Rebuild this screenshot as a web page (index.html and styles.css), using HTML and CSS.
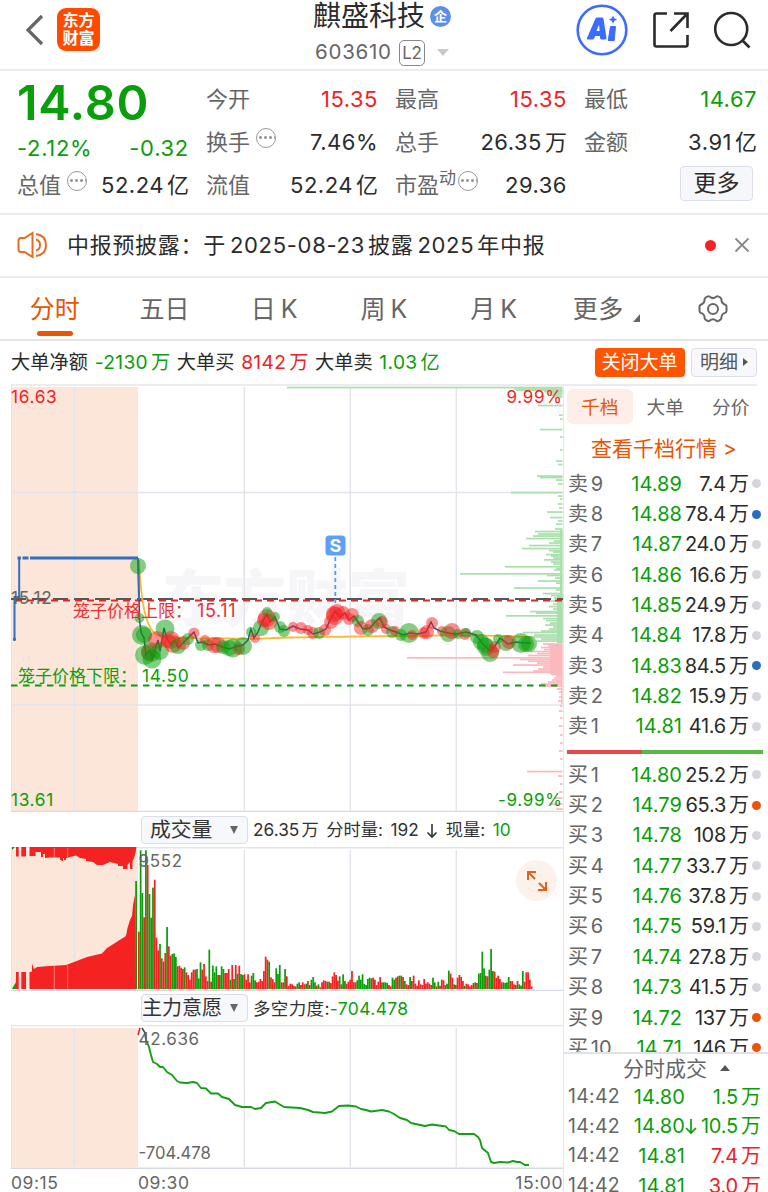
FILE: index.html
```
<!DOCTYPE html>
<html lang="zh-CN">
<head>
  <meta charset="UTF-8" />
  <meta name="viewport" content="width=device-width, initial-scale=1.0"/>
  <title>麒盛科技 603610</title>
  <link rel="stylesheet" href="styles.css">
</head>
<body>
  <header class="topbar">
    <div class="top-left">
      <svg class="back" width="20" height="32" viewBox="0 0 20 32"><path d="M17 2 3 16l14 14" fill="none" stroke="#666" stroke-width="3.2"/></svg>
      <div class="logo">东方<br>财富</div>
    </div>
    <div class="top-title">
      <div class="name">麒盛科技<span class="corp">企</span></div>
      <div class="code">603610<span class="l2">L2</span><i class="caret"></i></div>
    </div>
    <div class="top-right">
      <svg width="52" height="52" viewBox="0 0 52 52">
        <circle cx="26" cy="26" r="24.3" fill="#fff" stroke="#3c6cff" stroke-width="2.6"/>
        <path d="M19.500 14.500q.3-1 1.500-1h5q1.300 0 1.500 1.200L30.500 34q.2 1.500-1.200 1.500h-3.800q-1.200 0-1.400-1.200l-.3-2.300h-4.600l-1.200 2.500q-.4 1-1.500 1h-4.500q-1.700 0-1-1.600zM23 20.500l-2.500 6.500h3.100z" fill="#3c6cff" fill-rule="evenodd"/>
        <path d="M34.500 22.500h5l-1.300 14h-6z" fill="#3c6cff" stroke="#3c6cff" stroke-linejoin="round"/>
        <path d="M37 11.500l1.300 2.800 2.800 1.300-2.800 1.300-1.300 2.800-1.300-2.800-2.800-1.300 2.800-1.300z" fill="#3c6cff"/>
      </svg>
      <svg width="38" height="38" viewBox="0 0 38 38" fill="none" stroke="#2b2b2b" stroke-width="2.6">
        <path d="M15 2.500H4.500q-2 0-2 2v29q0 2 2 2h29q2 0 2-2V24"/>
        <path d="M22 2.500h13.500V17M35 3 18.500 20"/>
      </svg>
      <svg width="38" height="38" viewBox="0 0 38 38" fill="none" stroke="#2b2b2b" stroke-width="2.6">
        <circle cx="18.200" cy="18" r="16"/><path d="M29.500 29.500l7 7"/>
      </svg>
    </div>
  </header>

  <section class="quote">
    <div class="price-cell">
      <div class="price">14.80</div>
      <div class="change"><span>-2.12%</span><span>-0.32</span></div>
    </div>
    <div class="cell c2"><label>今开</label><b class="red">15.35</b></div>
    <div class="cell c3"><label>最高</label><b class="red">15.35</b></div>
    <div class="cell c4"><label>最低</label><b class="green">14.67</b></div>
    <div class="cell c2"><label>换手<i class="dots"></i></label><b>7.46%</b></div>
    <div class="cell c3"><label>总手</label><b>26.35<u>万</u></b></div>
    <div class="cell c4"><label>金额</label><b>3.91<u>亿</u></b></div>
    <div class="cell c1"><label>总值<i class="dots"></i></label><b>52.24<u>亿</u></b></div>
    <div class="cell c2"><label>流值</label><b>52.24<u>亿</u></b></div>
    <div class="cell c3"><label>市盈<sup>动</sup><i class="dots near"></i></label><b>29.36</b></div>
    <div class="cell c4"><button class="more">更多</button></div>
  </section>

  <section class="notice">
    <svg width="32" height="28" viewBox="0 0 32 28" fill="none" stroke="#ea6a1e" stroke-width="2">
      <path d="M15.500 2v24l-8-5H4q-2.500 0-2.500-2.500v-9Q1.500 7 4 7h3.500z"/>
      <path d="M19 8.500q4 1 4 5.500t-4 5.500M19 3q10 1.500 10 11T19 25"/>
    </svg>
    <p>中报预披露：于<em>2025-08-23</em>披露<em>2025</em>年中报</p>
    <i class="unread"></i>
    <svg width="16" height="16" viewBox="0 0 16 16"><path d="M1.500 1.500l13 13M14.500 1.500l-13 13" stroke="#888" stroke-width="1.800"/></svg>
  </section>

  <nav class="tabs">
    <span class="on">分时</span>
    <span>五日</span>
    <span>日<em>K</em></span>
    <span>周<em>K</em></span>
    <span>月<em>K</em></span>
    <span class="tab-more">更多<i></i></span>
    <span><svg width="30" height="30" viewBox="0 0 30 30" fill="none" stroke="#666" stroke-width="2">
      <path d="M9.500 2.500q1.200-.8 2.300.3 3.200 2.600 6.400 0 1.100-1.100 2.300-.3l2 1.200q1.100.8.9 2.200.2 3.600 3.800 4.800 1.300.5 1.300 1.800v4.600q0 1.300-1.300 1.800-3.600 1-3.800 4.800 0 1.300-.9 1.900l-2 1.300q-1.200.7-2.300-.3-3.200-2.600-6.400 0-1.100 1-2.300.3l-2-1.300q-.9-.6-.9-1.900-.2-3.800-3.800-4.800-1.300-.5-1.300-1.800v-4.600q0-1.300 1.300-1.800 3.600-1.200 3.800-4.800-.2-1.400.9-2.200z"/>
      <circle cx="15" cy="15" r="5"/>
    </svg></span>
  </nav>

  <section class="bigorder">
    <span>大单净额</span><span class="green">-2130<u>万</u></span>
    <span>大单买</span><span class="red">8142<u>万</u></span>
    <span>大单卖</span><span class="green">1.03<u>亿</u></span>
    <button class="close-big">关闭大单</button>
    <button class="detail">明细<i></i></button>
  </section>

  <main class="main">
    <div class="charts">
      <svg id="priceChart" width="563" height="427" viewBox="0 385 563 427"></svg>
      <div class="chart-bar">
        <div class="select">成交量<i></i></div>
        <p><span>26.35<u>万</u></span> <span>分时量:</span> <span>192</span> <svg width="12" height="17" viewBox="0 0 12 17"><path d="M6 2v13M1.500 10.500 6 15l4.500-4.500" fill="none" stroke="#333" stroke-width="1.600"/></svg> <span>现量:</span> <span class="green">10</span></p>
      </div>
      <div class="vol-wrap">
        <svg id="volChart" width="563" height="144" viewBox="0 847 563 144"></svg>
        <div class="expand"><svg width="22" height="22" viewBox="0 0 22 22" fill="none" stroke="#ea6014" stroke-width="2"><path d="M10 2H2v8M2 2l7 7M20 12v8h-8M20 20l-7-7"/></svg></div>
      </div>
      <div class="chart-bar bar2">
        <div class="select wide">主力意愿<i></i></div>
        <p><span>多空力度:</span><span class="green">-704.478</span></p>
      </div>
      <svg id="forceChart" width="563" height="144" viewBox="0 1025 563 144"></svg>
      <div class="axis"><span>09:15</span><span>09:30</span><span>15:00</span></div>
    </div>

    <aside class="side">
      <div class="side-tabs"><span class="on">千档</span><span>大单</span><span>分价</span></div>
      <div class="see-all">查看千档行情 <em>&gt;</em></div>
      <div class="book">
        <div id="asks"></div>
        <div class="ratio"><i></i></div>
        <div id="bids"></div>
      </div>
      <div class="deal-head">分时成交<i></i></div>
      <div id="deals"></div>
    </aside>
  </main>
  <script src="script.js"></script>
</body>
</html>
```
FILE: styles.css
```
* { box-sizing: border-box; }
html, body {
  margin: 0;
  padding: 0;
  background: #fff;
  overflow: hidden;
}
body {
  width: 768px;
  height: 1192px;
  font-family: Inter, "Noto Sans CJK SC", sans-serif;
  color: #2b2b2b;
  font-size: 22px;
  line-height: 1.3;
}
svg { display: block; flex-shrink: 0; }
b, em, i, u { font-weight: 400; font-style: normal; text-decoration: none; }
u { margin-left: 3px; letter-spacing: 0; }
button { font-family: inherit; padding: 0; color: inherit; }
.red { color: #ee2222; }
.green { color: #0a9e0a; }

/* -- HEADER -- */
.topbar {
  height: 71px;
  border-bottom: 2px solid #ececec;
  display: grid;
  grid-template-columns: 300px 1fr 300px;
}
.top-left {
  display: flex;
  align-items: flex-start;
  padding: 8px 0 0 25px;
  gap: 12px;
}
.back { margin-top: 6px; }
.logo {
  width: 43px;
  height: 43px;
  border-radius: 9px;
  background: #ff4a00;
  color: #fff;
  font-size: 16px;
  font-weight: 700;
  line-height: 17.500px;
  text-align: center;
  padding-top: 4px;
}
.name {
  display: flex;
  align-items: center;
  font-size: 28px;
  line-height: 32px;
  padding-left: 13px;
}
.corp {
  width: 21px;
  height: 21px;
  border-radius: 50%;
  background: #5e8fe8;
  color: #fff;
  font-size: 13px;
  font-weight: 700;
  line-height: 20px;
  text-align: center;
  margin-left: 5px;
}
.code {
  display: flex;
  align-items: center;
  font-size: 20.500px;
  letter-spacing: 0.750px;
  color: #666;
  padding-left: 15px;
  height: 41px;
}
.l2 {
  border: 1.500px solid #888;
  border-radius: 5px;
  width: 26px;
  height: 26px;
  font-size: 17px;
  line-height: 24px;
  letter-spacing: -0.500px;
  text-align: center;
  margin-left: 7px;
}
.caret {
  border: 6px solid transparent;
  border-top: 7px solid #c8c8c8;
  border-bottom: 0;
  margin-left: 12px;
}
.top-right {
  display: flex;
  align-items: center;
  justify-content: flex-end;
  gap: 23.500px;
  height: 60px;
  padding-right: 17px;
}

/* -- QUOTE -- */
.quote {
  height: 144px;
  padding: 7px 11px 0 17px;
  border-bottom: 2px solid #ececec;
  display: grid;
  grid-template-columns: 172px 172px 172px 173px;
  grid-template-rows: 43px 43px 42px;
  column-gap: 17px;
}
.price-cell { grid-row: span 2; color: #0a9e0a; }
.price {
  font-size: 48.500px;
  font-weight: 600;
  letter-spacing: 0.800px;
  line-height: 49px;
  height: 55px;
}
.change {
  display: flex;
  justify-content: space-between;
  line-height: 30px;
  letter-spacing: 0.700px;
}
.cell {
  display: flex;
  align-items: center;
  justify-content: space-between;
}
.cell b { letter-spacing: 0.500px; }
.cell label {
  color: #666;
  display: flex;
  align-items: center;
}
.cell sup {
  font-size: 17px;
  line-height: 17px;
  margin-bottom: 13px;
  vertical-align: baseline;
}
.dots {
  width: 20px;
  height: 20px;
  border-radius: 50%;
  border: 1.500px solid #999;
  margin: 0 0 9px 6px;
  background:
    radial-gradient(circle, #999 1.200px, transparent 1.700px) 0 0 / 5px 17px repeat-x;
  background-position: 1px 0;
}
.dots.near { margin-left: 2px; }
.more {
  width: 73px;
  height: 35px;
  margin: -4px 4px 0 auto;
  border: 1.500px solid #dcdfe8;
  border-radius: 4px;
  background: #f6f7fb;
  font-size: 23px;
  line-height: 28px;
}

/* -- NOTICE -- */
.notice {
  height: 63px;
  border-bottom: 2px solid #ececec;
  display: flex;
  align-items: center;
  padding: 0 18px 1px 17px;
}
.notice p {
  margin: 0 auto 0 18px;
  letter-spacing: 0.700px;
  white-space: nowrap;
}
.notice em { margin: 0 3px 0 4px; }
.unread {
  width: 11px;
  height: 11px;
  border-radius: 50%;
  background: #f52323;
  margin-right: 18px;
}

/* -- TABS -- */
.tabs {
  height: 63px;
  border-bottom: 2px solid #e2e2ea;
  display: flex;
}
.tabs span {
  width: 109.700px;
  height: 62px;
  display: flex;
  align-items: center;
  justify-content: center;
  font-size: 25px;
  color: #666;
  position: relative;
}
.tabs em { margin-left: 5px; }
.tabs .on { color: #ea5504; }
.tabs .on::after {
  content: "";
  position: absolute;
  left: 37px;
  bottom: 4px;
  width: 36px;
  height: 5px;
  border-radius: 3px;
  background: #ea5504;
}
.tabs .tab-more { padding-left: 6px; letter-spacing: 0.500px; }
.tab-more i {
  border-left: 7px solid transparent;
  border-bottom: 8px solid #666;
  margin: 18px 0 0 9px;
}

/* -- BIG ORDER -- */
.bigorder {
  height: 45px;
  margin: 0 11px;
  border-bottom: 2px solid #ececef;
  display: flex;
  align-items: center;
  gap: 6.500px;
  font-size: 19.200px;
  white-space: nowrap;
}
.bigorder span { letter-spacing: 0.100px; }
.bigorder .green, .bigorder .red { letter-spacing: 0.350px; }
.bigorder button {
  height: 29px;
  border-radius: 4px;
  font-size: 19px;
  line-height: 27px;
}
.close-big {
  width: 90px;
  margin-left: auto;
  border: 0;
  background: #ff5500;
  color: #fff;
}
.bigorder .detail {
  width: 66px;
  border: 1.500px solid #dcdfe8;
  background: #f7f8fb;
  color: #555;
}
.detail i {
  display: inline-block;
  border: 4px solid transparent;
  border-left: 5px solid #555;
  border-right: 0;
  margin: 0 0 3px 5px;
}

/* -- CHARTS -- */
.main { display: flex; margin-top: -1px; }
.charts { width: 563px; }
.charts text { font-family: Inter, "Noto Sans CJK SC", sans-serif; }
.num { letter-spacing: 0.650px; }
.chart-bar {
  height: 35px;
  display: flex;
  align-items: center;
  padding-left: 141px;
  font-size: 17.300px;
  white-space: nowrap;
  color: #333;
}
.chart-bar p {
  margin: 2px 0 0 5px;
  display: flex;
  align-items: center;
  gap: 7.500px;
}
.chart-bar u { margin-left: 2px; }
.bar2 { height: 34px; }
.bar2 p { gap: 0; font-size: 17.500px; letter-spacing: 0.350px; }
.select {
  width: 107px;
  height: 28px;
  border: 1.500px solid #dcdfe8;
  border-radius: 4px;
  background: #f7f8fb;
  font-size: 20.800px;
  line-height: 26px;
  padding-left: 8px;
  display: flex;
  align-items: center;
  justify-content: space-between;
  padding-right: 9px;
}
.select.wide { padding-left: 0; font-size: 20px; }
.select i {
  border: 4.500px solid transparent;
  border-top: 8px solid #666;
  border-bottom: 0;
}
.vol-wrap { position: relative; }
.expand {
  position: absolute;
  left: 516px;
  top: 13px;
  width: 41px;
  height: 41px;
  border-radius: 50%;
  background: #fdf1ec;
  display: flex;
  align-items: center;
  justify-content: center;
}
.axis {
  display: grid;
  grid-template-columns: 127px 1fr auto;
  padding: 0 0 0 11px;
  height: 28px;
  line-height: 28px;
  font-size: 17.500px;
  letter-spacing: 0.550px;
  color: #666;
}

/* -- SIDE -- */
.side {
  width: 205px;
  height: 807px;
  border-left: 1px solid #e4e6ec;
  overflow: hidden;
}
.side-tabs {
  display: flex;
  padding: 4px 0 0 3px;
  font-size: 18.700px;
  color: #666;
}
.side-tabs span {
  width: 65.500px;
  height: 35px;
  line-height: 37px;
  text-align: center;
  border-radius: 6px;
}
.side-tabs .on { background: #feeee7; color: #ea5504; }
.see-all {
  height: 44px;
  line-height: 49px;
  padding-left: 27px;
  font-size: 21px;
  color: #ea5504;
  white-space: nowrap;
}
.book {
  height: 586px;
  padding-top: 0.500px;
  overflow: hidden;
  border-bottom: 2px solid #e0e2e8;
}
.row {
  display: grid;
  grid-template-columns: 50px 64px 67px 10px;
  align-items: center;
  height: 30.350px;
  padding-left: 4px;
  font-size: 20px;
  white-space: nowrap;
}
.row span { text-align: right; letter-spacing: -0.250px; }
.row .lv { color: #666; text-align: left; }
.row .green { letter-spacing: 0.050px; }
.dot {
  width: 9px;
  height: 9px;
  border-radius: 50%;
  background: #d5d6dc;
  margin-left: 3px;
}
.dot.blue { background: #2c6cc0; }
.dot.orange { background: #ea5504; }
.ratio {
  height: 4px;
  margin: 8px 5px 6px 3px;
  background: #55b944;
}
.ratio i { display: block; width: 75px; height: 4px; background: #e84848; }
.deal-head {
  height: 28px;
  line-height: 27px;
  padding-left: 59px;
  font-size: 21px;
  color: #666;
  display: flex;
  align-items: center;
}
.deal-head i {
  border: 5px solid transparent;
  border-bottom: 6px solid #555;
  border-top: 0;
  margin-left: 13px;
}
.deal {
  display: grid;
  grid-template-columns: 64px 53px 13px 1fr;
  align-items: center;
  height: 29.600px;
  padding: 0 7px 0 4px;
  font-size: 20px;
  white-space: nowrap;
}
.deal .time { color: #666; font-size: 19.500px; letter-spacing: 0.250px; }
.deal .pr { color: #0a9e0a; text-align: right; letter-spacing: 0.100px; }
.deal .vol { text-align: right; letter-spacing: -0.200px; }
```
FILE: script.js
```
const GREEN = '#0a9e0a';
const RED = '#f52222';
const GRID = '#e2e4ec';

const line = (x1, y1, x2, y2, c, w = 1, more = '') =>
  `<line x1="${x1}" y1="${y1}" x2="${x2}" y2="${y2}" stroke="${c}" stroke-width="${w}" ${more}/>`;
const rect = (x, y, w, h, c, more = '') =>
  `<rect x="${x}" y="${y}" width="${w}" height="${h}" fill="${c}" ${more}/>`;
const text = (x, y, s, c, size = 17, more = 'class="num"') =>
  `<text x="${x}" y="${y}" fill="${c}" font-size="${size}" ${more}>${s}</text>`;

function grid(top, bottom) {
  return rect(11, top, 127, bottom - top, '#fce6da') +
    line(11.5, top - 2, 11.5, bottom, GRID) +
    [74.5, 244.3, 350.3, 456.3].map(x => line(x, top, x, bottom, GRID, 1.4)).join('');
}

/* ---- price ---- */
// x, y, radius, colour
const bubbles = [
  [138,566,8,'g'],[139.500,618,5,'g'],[142,635,10,'g'],[144,635,8,'g'],[145,655,10,'g'],[149,652,8,'r'],
  [152,659,9.500,'g'],[151,652,10,'g'],[165,629,9.500,'g'],[157,640,9,'r'],[160,651,9,'g'],[168,641,7,'r'],
  [171,640,9,'r'],[173,644,9,'r'],[178,646,8,'g'],[183,643,7,'r'],[188,639,6,'g'],[194,633,5.500,'r'],
  [201,645,6,'g'],[205,640,5,'r'],[208,645,6,'g'],[214,645,8,'r'],[218,645,8,'r'],[223,647,7,'g'],
  [229,648,8,'g'],[233,648,9.500,'g'],[239,649,6,'r'],[243,646,9,'g'],[251,632,5,'g'],[255,638,5,'r'],
  [261,628,8,'g'],[264,620,7,'r'],[267,618,9,'r'],[267,612,5,'g'],[269,622,8,'r'],[275,617,5,'g'],
  [280,627,6,'g'],[284,631,6,'g'],[293,627,5,'r'],[301,628,6,'r'],[308,630,5,'r'],[313,633,6,'r'],
  [319,633,6,'g'],[325,630,6,'r'],[331,622,7,'r'],[334,614,8,'r'],[337,612,8,'r'],[335,616,9,'r'],
  [343,613,7,'r'],[349,619,6,'r'],[352,615,7,'r'],[358,621,6,'g'],[361,628,7,'r'],[368,630,6,'g'],
  [372,626,7,'r'],[379,621,8,'g'],[382,622,6,'r'],[386,629,5,'r'],[392,632,6,'g'],[395,631,5,'r'],
  [401,635,6,'g'],[409,633,10,'g'],[412,635,5,'r'],[424,633,6,'r'],[427,632,7,'r'],[432,623,6,'r'],
  [442,631,5,'r'],[448,634,8,'g'],[452,631,8,'r'],[458,634,5,'g'],[465,634,6,'r'],[466,633,5,'g'],
  [477,637,7,'g'],[481,642,8,'g'],[486,647,9,'g'],[485,645,8,'g'],[490,653,9,'g'],[493,652,6,'r'],
  [495,647,6,'r'],[498,639,5,'g'],[506,643,8,'g'],[509,642,7,'r'],[521,643,10,'g'],[526,644,8,'g'],
  [529,644,8,'g']
];
const trend = '138,558 138.500,575 139.500,620 141,632 144,638 146,655 150,650 152,659 155,650 158,640 160,651 164,628 167,639 171,644 175,640 178,648 183,643 188,638 194,632 198,643 203,642 208,645 215,644 222,647 229,649 235,647 243,645 248,640 251,629 254,638 258,632 262,622 267,614 270,622 275,617 280,629 286,630 293,626 300,629 308,630 313,634 320,632 326,629 331,618 335,611 340,617 345,613 349,620 354,616 358,622 363,629 370,628 376,621 380,618 384,627 390,630 396,632 403,635 410,633 418,634 426,632 431,622 434,628 440,631 448,633 456,634 466,632 476,635 482,643 490,651 495,646 500,638 508,644 516,642 524,643 531,643';

// y, left edge of the bar
const upper = [
  [387.5,287],[389,514],[390,516],[391.5,544],[393,548],[395,551],[397,553],[405.500,538],[415,559],[419,560],[429.500,540],
  [437,560],[450,560],[461,556],[464.500,558],[476,537],[477.500,540],[480,556],[484,558],[492.500,511],[496,558],[499,560],[504,558],
  [508,559],[512,547],[517.500,550],[521,558],[524,556],[529,555],[531.500,535],[534,538],[536,533],[538.500,526],
  [541,554],[543,549],[545.500,529],[548.500,522],[550.500,549],[552,553],[554.500,546],[556,551],[558,553],[559.800,544],[562,551],
  [564,553],[566.700,505],[568.500,556],[570,554],[573.800,460],[575.500,547],[578,555],[581,538],[583,556],[588,514],
  [590,556],[593.500,543],[595.500,551],[598,554],[601,550],[604,553],[606.500,549],[609,553],[611.500,530],[613,536],[615.800,506],
  [618.500,543],[620.500,546],[623,550],[625,545],[627,553],[629,549],[631,541],[632.500,523],[635,534],[637,529],[639,541],[641,536]
];
const lower = [
  [644,543],[645.500,548],[647.500,541],[649.500,544],[651.500,530],[653.500,537],[655.500,528],[657.800,407],[659.500,520],[661.200,528],[663,537],
  [665,513],[667,543],[669,538],[671,533],[672.300,503],[674.500,551],[676,556],[678,554],[680,552],[682,548],[684,541],[686,545],[689,557],
  [692,559],[697,559],[701,558],[706,560],[711,559],[718,560],[726,559],[735,560],[743,560],[751,559],[759,560],[771.500,527],
  [776,558],[784,560],[792,559],[798,555],[804,549],[809,556]
];

let p = grid(387, 811) +
  text(162, 622, '东方财富', '#f6f6f8', 62, 'font-weight="900"') +
  line(11, 492.500, 563, 492.500, GRID, 1.400) +
  line(11, 705, 563, 705, GRID, 1.400) +
  line(11, 811.5, 563, 811.5, '#d6dae3', 1.400) +
  [244.3, 350.3].map(x => line(x, 560, x, 630, GRID, 1.400)).join('');
p += upper.map(([y, x]) => rect(x, y - 0.8, 562.5 - x, 1.700, '#a9dfab')).join('');
// packed levels right at the axis
p += rect(560, 530, 2.5, 113, '#a9dfab') + rect(557, 595, 5.5, 48, '#a9dfab') + rect(550, 644, 12.5, 30, '#fbb9bd') + rect(561, 674, 1.5, 30, '#fbb9bd');
p += lower.map(([y, x]) => rect(x, y - 0.8, 562.5 - x, 1.700, '#fbb9bd')).join('');
p += line(11, 599, 563, 599, '#555', 1.8, 'stroke-dasharray="15 6"');
p += line(15, 600.4, 563, 600.4, '#e22', 2, 'stroke-dasharray="7 5"');
p += line(11, 685.5, 563, 685.5, GREEN, 1.8, 'stroke-dasharray="6.500 5.500"');
p += '<path d="M139 560C141 600 145 627 156 634C165 640 195 638 230 638.500C255 640 265 638 290 637.500C330 637 370 636 410 636C450 635 480 634.500 531 637" fill="none" stroke="#f8bb35" stroke-width="1.800"/>';
p += `<polyline points="${trend}" fill="none" stroke="#2b4a8c" stroke-width="1.500"/>`;
p += '<path d="M138 558L139 600" fill="none" stroke="#2f6fc4" stroke-width="2"/>';
p += bubbles.map(([x, y, r, c]) => `<circle cx="${x}" cy="${y}" r="${r}" fill="${c === 'g' ? GREEN : RED}" fill-opacity=".5"/>`).join('');
p += '<path d="M14.500 641V597H19.200V558" fill="none" stroke="#2f6fc4" stroke-width="2"/>';
p += line(17.5, 558, 21, 558, '#2f6fc4', 3) + line(22.5, 558, 28.5, 558, '#2f6fc4', 3) + line(30, 558, 138, 558, '#2f6fc4', 3);
p += '<circle cx="14.500" cy="639" r="1.600" fill="#2f6fc4"/>';
p += line(335.3, 557, 335.3, 603, '#559af8', 1.8, 'stroke-dasharray="4 3"');
p += rect(325.500, 535.500, 20, 20, '#5da0fa', 'rx="3.500"') + text(335.500, 552, 'S', '#fff', 18, 'font-weight="700" text-anchor="middle"');
p += text(11, 402.500, '16.63', RED, 17.3) + text(562.5, 402.500, '9.99%', RED, 17, 'class="num" text-anchor="end"');
p += text(11, 604, '15.12', '#666', 17.3) + text(11, 805.500, '13.61', GREEN, 17.3) + text(562.5, 805.500, '-9.99%', GREEN, 17, 'class="num" text-anchor="end"');
p += text(73, 617, '笼子价格上限：', '#e83030', 17, '') + text(197, 617, '15.11', '#e83030', 18);
p += text(18, 681.500, '笼子价格下限：', GREEN, 17, '') + text(142, 681.500, '14.50', GREEN, 17.4);
document.getElementById('priceChart').innerHTML = p;

/* ---- volume ---- */
// one bar per minute from 09:30, height in thirds of a pixel
const vols = ('r172 g416 g288 r215 g416 r372 g285 g214 g304 r328 r154 r116 g135 r92 r82 r108 g186 r128 r100 g105 g107 g96 r68 r70 r64 r60 g65 r50 r42 r28 ' +
  'r50 r58 r58 g60 g32 g80 r58 r75 r38 r24 g118 r22 g70 g50 g68 r42 g42 g68 g60 r48 r48 r60 g28 r72 g30 r72 g46 r70 g45 g42 ' +
  'r44 r28 r44 r20 g40 g48 g26 r20 r22 r30 r24 r54 r97 r88 g82 r35 r30 r20 g62 g45 g72 r20 r20 g60 r38 r10 r16 r14 r10 r8 ' +
  'g16 g20 r12 r20 r14 g16 r24 g12 g28 g36 g20 r10 g14 r5 r20 r26 r24 r22 g22 r18 r38 r50 r42 r25 g38 r14 g44 g24 r16 r22 ' +
  'r28 r54 r20 r20 g26 g40 g28 g44 g15 g12 g30 g34 g32 r34 r28 r12 r22 r36 g20 g20 g20 g18 r12 r8 g34 g28 r34 g38 r40 g40 ' +
  'r36 g24 r14 r12 g36 r24 r40 r16 r10 r26 r14 r12 r30 r16 r20 r16 r12 g34 g20 r8 g22 r10 r28 r26 r12 g16 g55 r46 r34 g14 ' +
  'r12 r34 r42 r36 r24 g10 r16 r14 r8 r12 r18 g20 r18 g46 g48 g112 g62 r40 r38 g58 g120 g54 r52 r34 r40 r30 r20 g20 g18 g20 ' +
  'g36 r24 r24 r14 g12 r24 g14 g10 g54 r22 r50 r50 r28 r8').split(' ');
const pitch = 394.5 / vols.length;

let v = grid(850, 989) + line(11, 847.7, 563, 847.7, GRID, 1.400) + line(11, 990.5, 563, 990.5, '#d6dae3', 1.400);
v += '<path d="M29.500 989V972L32 971.500V963.500L34 969L37 967L50 966L66 965L74 962L87 957L102 953.500L107 948L115 943L126 936L127.500 928L130 920L132 916L133 905L135 895L136 988V989Z" fill="#f52222"/>';
v += '<path d="M29.500 847V856H35.500V852H41V857H43V854H45V858L50 857.500H60V860H61.500V861H63V858H64V860H66V858L76 855.500L80 858L86 859V861L93 862L97 865H103L110 862L118 864V866H123V869H127.500V865L130 862V869H132.500V861L134 858L135.500 853L136.500 847Z" fill="#f52222"/>';
v += rect(16, 972, 2.7, 17, RED) + rect(21.3, 972, 4.7, 17, RED) + rect(16, 847, 2.7, 9.5, RED) + rect(21.3, 847, 4.7, 9.5, RED);
v += '<path d="M12 989L16 982V989ZM12 847V850L15 847Z" fill="#0a9e0a"/>' + rect(135.200, 881, 1.800, 108, GREEN);
v += rect(53.8, 848, .8, 10, '#f9968f') + rect(53.8, 966, .8, 23, '#f9968f') + rect(67.5, 848, .6, 10, '#f9968f') + rect(67.5, 965, .6, 24, '#f9968f');
v += vols.map((s, i) => {
  const h = +s.slice(1) / 3;
  return rect((138 + i * pitch).toFixed(2), (989 - h).toFixed(2), 1.75, h.toFixed(2), s[0] === 'g' ? '#0a9e0a' : RED);
}).join('');
v += text(138.500, 866.500, '9552', '#666', 17);
document.getElementById('volChart').innerHTML = v;

/* ---- force ---- */
let f = line(11, 1025.5, 563, 1025.5, GRID, 1.400) + grid(1028, 1167) + line(11, 1168.3, 563, 1168.3, '#d6dae3', 1.800);
f += '<path d="M138 1035L140 1028" stroke="#f52222" stroke-width="1.600"/><path d="M142 1028L144.500 1032L146 1040" fill="none" stroke="#444" stroke-width="1.500"/>';
f += '<polyline points="146,1040 149,1047 151,1055 153,1062 157,1064 160,1067 163,1067 167,1072 172,1075 177,1081 180,1082.500 187,1083 193,1082 197,1083 201,1088 206,1088.500 211,1093.500 218,1093.500 222,1097 229,1099 235,1105 242,1107 251,1107 255,1109 261,1108 266,1103 272,1102 275,1101.500 279,1104 284,1107 300,1108 308,1110 313,1112 325,1113 332,1111.500 339,1106 348,1105.500 356,1106.500 361,1109 366,1110 371,1111.500 382,1110 389,1111.500 394,1114 400,1118 407,1120 411,1123 425,1126 432,1124.500 446,1126.500 449,1130 454,1131 459,1134 474,1134 478,1137 480,1140 482,1148 488,1153 491,1162 494,1163 500,1162 508,1162.500 513,1161 517,1162 520,1162 525,1165 529,1165" fill="none" stroke="#12a012" stroke-width="1.900" stroke-linejoin="round"/>';
f += text(138.500, 1044.500, '42.636', '#666', 17) + text(138.500, 1159, '-704.478', '#666', 16.7, '');
document.getElementById('forceChart').innerHTML = f;

/* ---- order book ---- */
const asks = [[9,'14.89','7.4'],[8,'14.88','78.4','blue'],[7,'14.87','24.0'],[6,'14.86','16.6'],[5,'14.85','24.9'],[4,'14.84','17.8'],[3,'14.83','84.5','blue'],[2,'14.82','15.9'],[1,'14.81','41.6']];
const bids = [[1,'14.80','25.2'],[2,'14.79','65.3','orange'],[3,'14.78','108'],[4,'14.77','33.7'],[5,'14.76','37.8'],[6,'14.75','59.1'],[7,'14.74','27.8'],[8,'14.73','41.5'],[9,'14.72','137','orange'],[10,'14.71','146','orange']];
const bookRow = side => ([n, price, vol, dot = '']) =>
  `<div class="row"><span class="lv">${side}<u>${n}</u></span><span class="green">${price}</span><span>${vol}<u>万</u></span><i class="dot ${dot}"></i></div>`;
document.getElementById('asks').innerHTML = asks.map(bookRow('卖')).join('');
document.getElementById('bids').innerHTML = bids.map(bookRow('买')).join('');

const arrow = '<svg width="12" height="17" viewBox="0 0 12 17"><path d="M6 1v14M1 10l5 5 5-5" fill="none" stroke="#0a9e0a" stroke-width="1.700"/></svg>';
const deals = [['14.80','1.5','green',''],['14.80','10.5','green',arrow],['14.81','7.4','red',''],['14.81','3.0','red','']];
document.getElementById('deals').innerHTML = deals.map(([price, vol, c, a]) =>
  `<div class="deal"><span class="time">14:42</span><span class="pr">${price}</span><span>${a}</span><span class="vol ${c}">${vol}<u>万</u></span></div>`).join('');
```
